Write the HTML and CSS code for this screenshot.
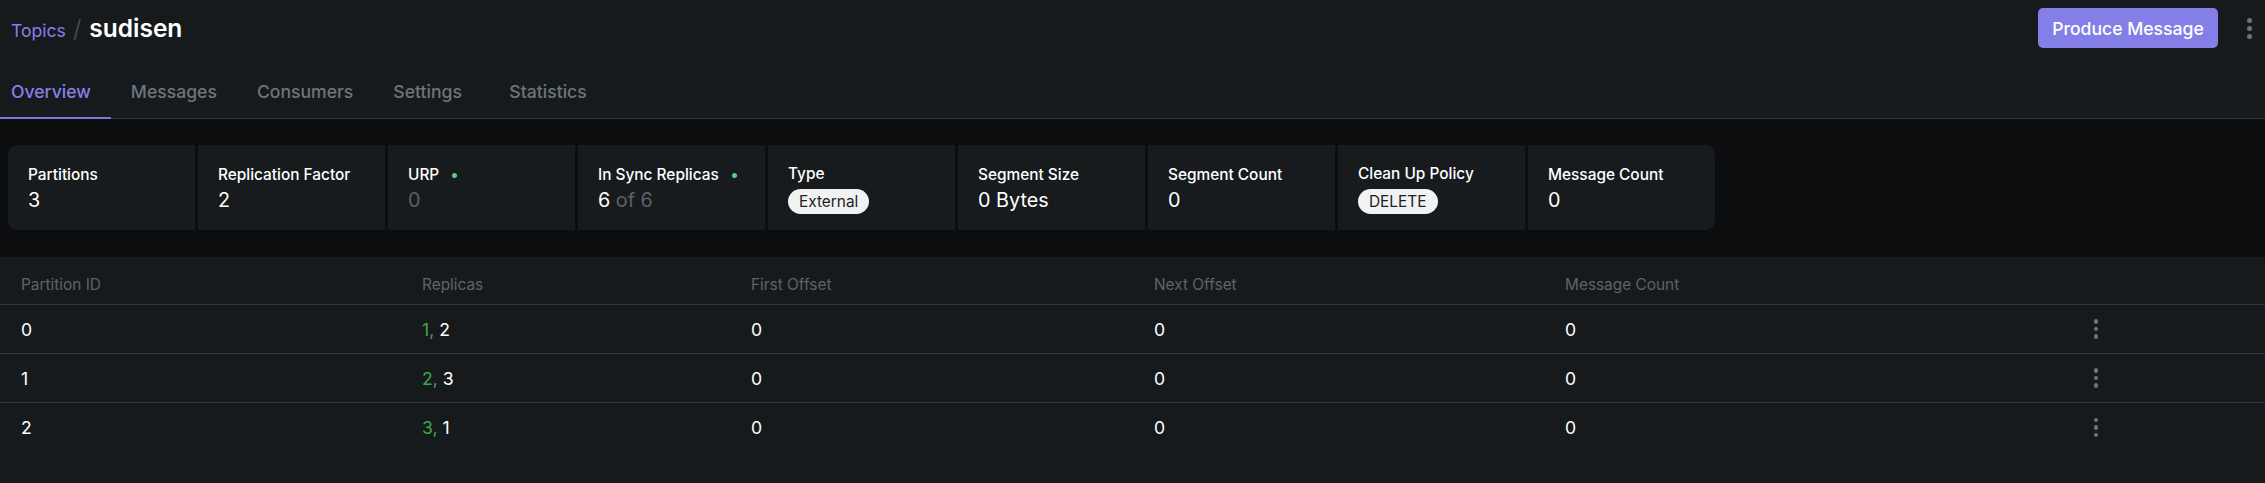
FILE: index.html
```html
<!DOCTYPE html>
<html lang="en">
<head>
<meta charset="utf-8">
<title>sudisen</title>
<link rel="stylesheet" href="styles.css">
</head>
<body>
<header class="page-header">
  <div class="crumbs">
    <a class="crumb-link" href="#">Topics</a>
    <span class="crumb-sep">/</span>
    <h1 class="crumb-title">sudisen</h1>
  </div>
  <div class="actions">
    <button class="btn-primary" type="button">Produce Message</button>
    <button class="kebab kebab-lg" type="button" aria-label="More"><span></span><span></span><span></span></button>
  </div>
</header>

<nav class="tabs">
  <a class="tab active" href="#">Overview</a>
  <a class="tab" href="#">Messages</a>
  <a class="tab" href="#">Consumers</a>
  <a class="tab" href="#">Settings</a>
  <a class="tab" href="#">Statistics</a>
</nav>

<section class="band">
  <div class="stats">
    <div class="stat"><div class="stat-label">Partitions</div><div class="stat-value">3</div></div>
    <div class="stat"><div class="stat-label">Replication Factor</div><div class="stat-value">2</div></div>
    <div class="stat"><div class="stat-label">URP <span class="dot"></span></div><div class="stat-value muted">0</div></div>
    <div class="stat"><div class="stat-label">In Sync Replicas <span class="dot"></span></div><div class="stat-value">6 <span class="muted">of 6</span></div></div>
    <div class="stat"><div class="stat-label">Type</div><div class="stat-value"><span class="pill">External</span></div></div>
    <div class="stat"><div class="stat-label">Segment Size</div><div class="stat-value">0 Bytes</div></div>
    <div class="stat"><div class="stat-label">Segment Count</div><div class="stat-value">0</div></div>
    <div class="stat"><div class="stat-label">Clean Up Policy</div><div class="stat-value"><span class="pill">DELETE</span></div></div>
    <div class="stat"><div class="stat-label">Message Count</div><div class="stat-value">0</div></div>
  </div>
</section>

<section class="table">
  <div class="row head">
    <div class="cell">Partition ID</div>
    <div class="cell">Replicas</div>
    <div class="cell">First Offset</div>
    <div class="cell">Next Offset</div>
    <div class="cell">Message Count</div>
    <div class="cell"></div>
  </div>
  <div class="row">
    <div class="cell">0</div>
    <div class="cell"><span class="leader">1,</span> 2</div>
    <div class="cell">0</div>
    <div class="cell">0</div>
    <div class="cell">0</div>
    <div class="cell cell-actions"><button class="kebab" type="button" aria-label="Actions"><span></span><span></span><span></span></button></div>
  </div>
  <div class="row">
    <div class="cell">1</div>
    <div class="cell"><span class="leader">2,</span> 3</div>
    <div class="cell">0</div>
    <div class="cell">0</div>
    <div class="cell">0</div>
    <div class="cell cell-actions"><button class="kebab" type="button" aria-label="Actions"><span></span><span></span><span></span></button></div>
  </div>
  <div class="row last">
    <div class="cell">2</div>
    <div class="cell"><span class="leader">3,</span> 1</div>
    <div class="cell">0</div>
    <div class="cell">0</div>
    <div class="cell">0</div>
    <div class="cell cell-actions"><button class="kebab" type="button" aria-label="Actions"><span></span><span></span><span></span></button></div>
  </div>
</section>
</body>
</html>
```

FILE: styles.css
```css
* { box-sizing: border-box; }

html, body {
  margin: 0;
  padding: 0;
  background: #171a1d;
  color: #ffffff;
  font-family: Inter, "Noto Sans", sans-serif;
  height: 100%;
}

.page-header {
  display: flex;
  justify-content: space-between;
  align-items: center;
  height: 56px;
  padding: 0 11px 0 11px;
}

.crumbs {
  display: flex;
  align-items: baseline;
}

.crumb-link {
  color: #8580e8;
  font-size: 17.6px;
  text-decoration: none;
}

.crumb-sep {
  color: #4b5056;
  font-size: 24px;
  font-weight: 300;
  margin: 0 8px 0 7px;
}

.crumb-title {
  margin: 0;
  font-size: 24.5px;
  font-weight: 600;
  color: #ffffff;
}

.actions {
  display: flex;
  align-items: center;
  gap: 26px;
}

.btn-primary {
  width: 180px;
  height: 40px;
  border: 0;
  border-radius: 5px;
  background: #837fe7;
  color: #ffffff;
  font-family: inherit;
  font-size: 17.6px;
  font-weight: 500;
}

.kebab {
  display: flex;
  flex-direction: column;
  align-items: center;
  gap: 3px;
  padding: 0;
  border: 0;
  background: transparent;
  width: 10px;
}

.kebab span {
  width: 4.5px;
  height: 4.5px;
  border-radius: 50%;
  background: #6b7479;
}

.kebab-lg span { width: 5px; height: 5px; }

.tabs {
  display: flex;
  align-items: flex-end;
  height: 63px;
  border-bottom: 1px solid #33373b;
}

.tab {
  display: block;
  min-width: 116px;
  padding: 0 20px 13px;
  line-height: 24px;
  font-size: 17.6px;
  font-weight: 500;
  color: #6c757d;
  text-decoration: none;
  border-bottom: 2px solid transparent;
  margin-bottom: -1px;
}

.tab.active {
  min-width: 0;
  color: #8580e8;
  border-bottom-color: #7c78e0;
  padding-left: 11px;
  padding-right: 20px;
}

.band {
  background: #0c0d0f;
  padding: 26px 8px 27px;
}

.stats {
  display: flex;
  gap: 3px;
  width: max-content;
  border-radius: 9px;
  overflow: hidden;
}

.stat {
  width: 187px;
  height: 85px;
  background: #181b1e;
  padding: 3px 20px 0;
  display: flex;
  flex-direction: column;
  justify-content: center;
  gap: 3px;
}

.stat-label {
  font-size: 15.4px;
  font-weight: 500;
  line-height: 20px;
  display: flex;
  align-items: center;
  gap: 13px;
}

.dot {
  width: 5px;
  height: 5px;
  border-radius: 50%;
  background: #5ccc7f;
}

.stat-value {
  font-size: 19.8px;
  line-height: 25px;
}

.muted { color: #5a6168; }

.pill {
  display: inline-block;
  background: #f1f2f3;
  color: #1c1e21;
  font-size: 15.4px;
  line-height: 25px;
  padding: 0 11px;
  border-radius: 13px;
  vertical-align: middle;
}

.table {
  background: #171a1d;
}

.row {
  display: grid;
  grid-template-columns: 401px 329px 403px 411px 531px 1fr;
  height: 49px;
  align-items: center;
  border-bottom: 1px solid #33373b;
  font-size: 17.6px;
}

.row.last { border-bottom: 0; }

.row.head {
  height: 48px;
  font-size: 15.4px;
  color: #5b646b;
}

.row.head .cell { padding-top: 8px; }

.cell {
  padding-left: 21px;
}

.cell-actions { padding-left: 16px; }

.leader { color: #3fa54e; }
```
